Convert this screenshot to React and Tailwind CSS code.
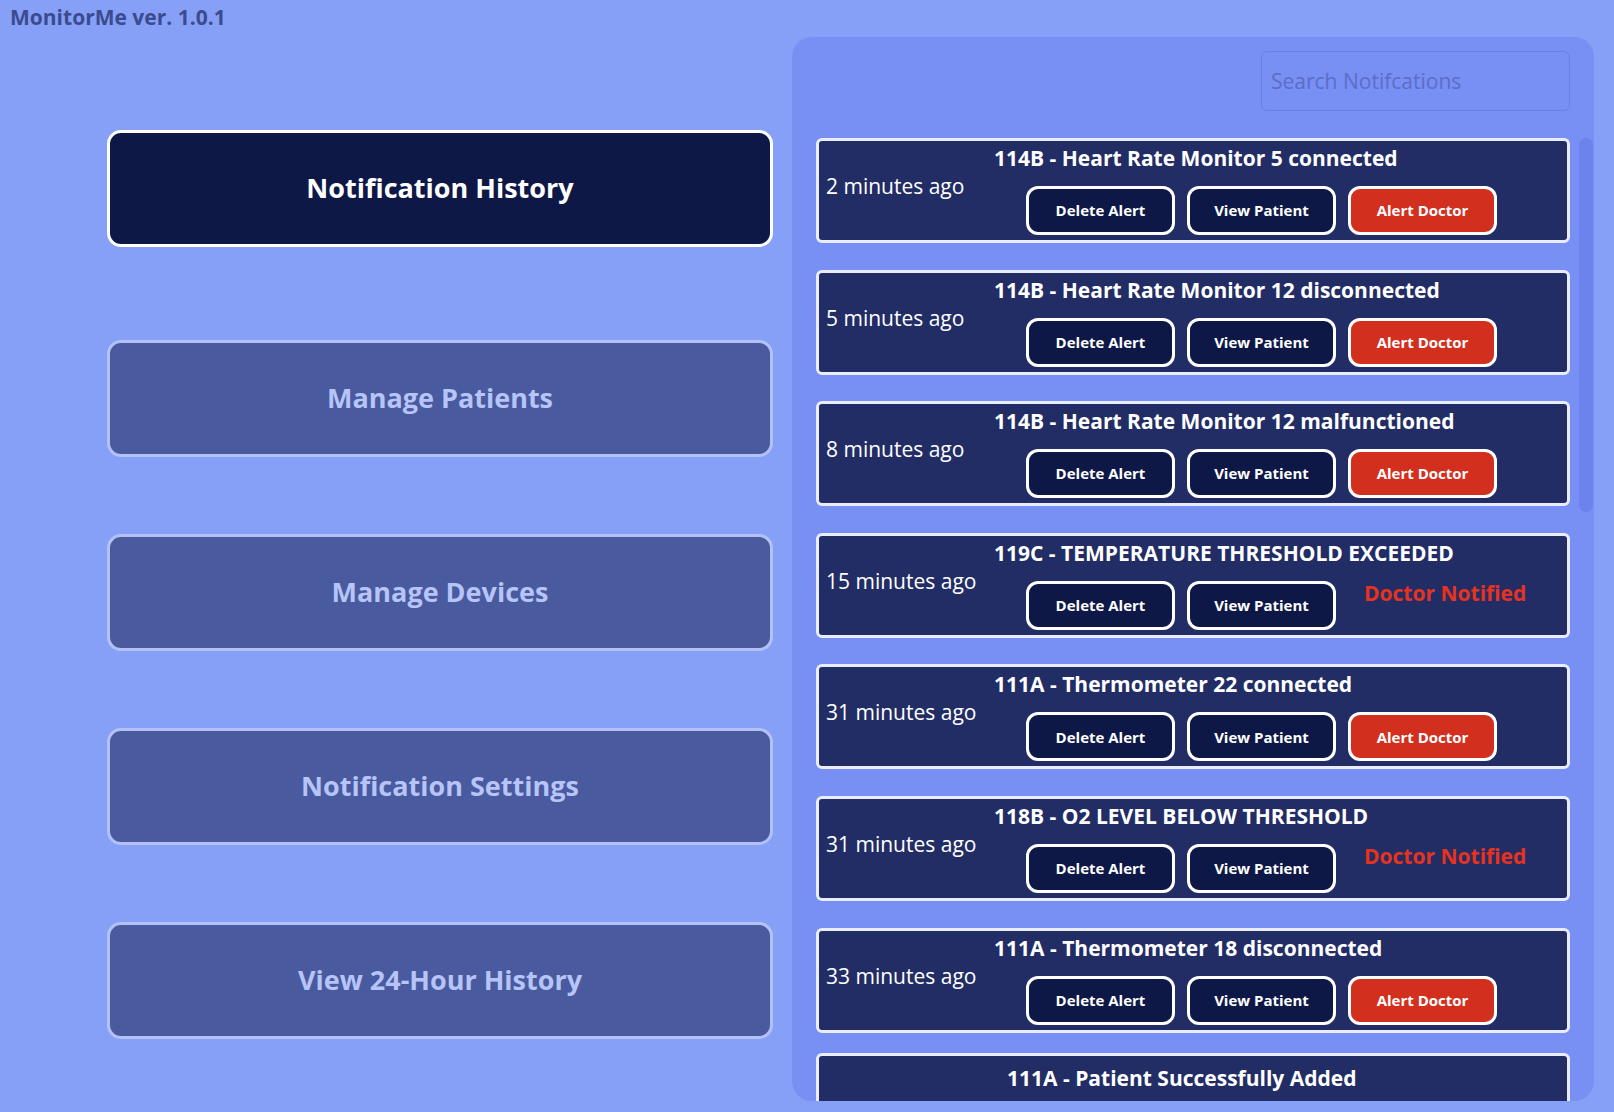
import React from 'react';

const NAV_ITEMS = [
  { label: 'Notification History', active: true },
  { label: 'Manage Patients' },
  { label: 'Manage Devices' },
  { label: 'Notification Settings' },
  { label: 'View 24-Hour History' },
];

const NOTIFICATIONS = [
  { title: '114B - Heart Rate Monitor 5 connected', time: '2 minutes ago', status: 'alert' },
  { title: '114B - Heart Rate Monitor 12 disconnected', time: '5 minutes ago', status: 'alert' },
  { title: '114B - Heart Rate Monitor 12 malfunctioned', time: '8 minutes ago', status: 'alert' },
  { title: '119C - TEMPERATURE THRESHOLD EXCEEDED', time: '15 minutes ago', status: 'notified' },
  { title: '111A - Thermometer 22 connected', time: '31 minutes ago', status: 'alert' },
  { title: '118B - O2 LEVEL BELOW THRESHOLD', time: '31 minutes ago', status: 'notified' },
  { title: '111A - Thermometer 18 disconnected', time: '33 minutes ago', status: 'alert' },
  { title: '111A - Patient Successfully Added', time: '40 minutes ago', status: 'info' },
  { title: '112C - Blood Pressure Monitor 3 connected', time: '44 minutes ago', status: 'alert' },
];

function NavButton({ label, active }) {
  return (
    <button
      className={`w-full h-[117px] rounded-[14px] border-[3px] text-[27px] font-bold ${
        active
          ? 'bg-[#0e1846] border-white text-white'
          : 'bg-[#4a5a9e] border-[#b3c1f7] text-[#b6c4f8]'
      }`}
    >
      {label}
    </button>
  );
}

function CardButton({ children, red }) {
  return (
    <button
      className={`w-[149px] h-[49px] rounded-[12px] border-[3px] border-white text-[15px] font-bold text-white ${
        red ? 'bg-[#d32f1f]' : 'bg-[#0e1846]'
      }`}
    >
      {children}
    </button>
  );
}

function NotificationCard({ item }) {
  if (item.status === 'info') {
    return (
      <div className="h-[105px] shrink-0 -mt-[6px] rounded-[6px] border-[3px] border-[#e9edfb] bg-[#222d66] pl-[188px] pt-[8px]">
        <div className="text-[21px] leading-[28px] font-bold text-white">{item.title}</div>
        <div className="pt-[2px] text-[18px] text-[#c9d2f5]">{item.time}</div>
      </div>
    );
  }

  return (
    <div className="h-[105px] shrink-0 rounded-[6px] border-[3px] border-[#e9edfb] bg-[#222d66] flex">
      <div className="w-[175px] shrink-0 pl-[7px] pt-[31px] text-[21px] leading-[28px] text-white whitespace-nowrap">{item.time}</div>
      <div className="flex flex-col">
        <div className="mt-[3px] text-[21px] leading-[28px] font-bold text-white whitespace-nowrap">{item.title}</div>
        <div className="flex items-center gap-[12px] mt-[14px] pl-[32px]">
          <CardButton>Delete Alert</CardButton>
          <CardButton>View Patient</CardButton>
          {item.status === 'alert' ? (
            <CardButton red>Alert Doctor</CardButton>
          ) : (
            <span className="ml-[16px] -mt-[24px] text-[21px] font-bold text-[#e5331f] whitespace-nowrap">Doctor Notified</span>
          )}
        </div>
      </div>
    </div>
  );
}

export default function App() {
  return (
    <div className="h-[1112px] overflow-hidden bg-[#86a0f8]" style={{ fontFamily: '"Open Sans", "Noto Sans", sans-serif' }}>
      <div className="h-[37px] pl-[10px] pt-[3px] text-[21px] leading-[28px] font-bold text-[#3b4b8f]">MonitorMe ver. 1.0.1</div>

      <div className="flex">
        <div className="w-[792px] shrink-0 pl-[107px] pr-[19px] pt-[93px] flex flex-col">
          <NavButton {...NAV_ITEMS[0]} />
          <div className="mt-[93px] flex flex-col gap-[77px]">
            {NAV_ITEMS.slice(1).map((item) => (
              <NavButton key={item.label} {...item} />
            ))}
          </div>
        </div>

        <div className="w-[802px] h-[1064px] shrink-0 rounded-[20px] bg-[#7890f4] flex flex-col overflow-hidden">
          <div className="h-[101px] shrink-0 flex justify-end pr-[24px] pt-[14px]">
            <input
              placeholder="Search Notifcations"
              className="w-[309px] h-[60px] rounded-[6px] border border-[#6a80e2] bg-transparent px-[9px] text-[21px] text-[#2a3780] placeholder:text-[#5a6ec8] outline-none"
            />
          </div>
          <div className="flex-1 min-h-0 flex">
            <div className="flex-1 min-w-0 overflow-hidden pl-[24px] pr-[9px] flex flex-col gap-[26.6px]">
              {NOTIFICATIONS.map((item, i) => (
                <NotificationCard key={i} item={item} />
              ))}
            </div>
            <div className="w-[15px] shrink-0">
              <div className="w-[14px] h-[374px] rounded-full bg-[#6c83ee]" />
            </div>
          </div>
        </div>
      </div>
    </div>
  );
}
